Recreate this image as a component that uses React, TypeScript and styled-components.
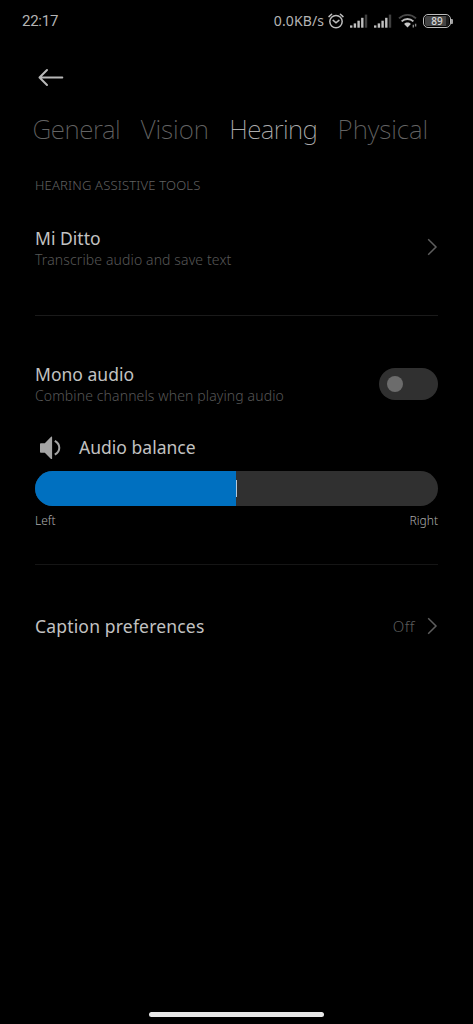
import React from 'react';
import styled, { createGlobalStyle } from 'styled-components';

const GlobalStyle = createGlobalStyle`
  * { box-sizing: border-box; }
  body {
    margin: 0;
    background: #000;
    font-family: "Noto Sans", "Open Sans", sans-serif;
  }
`;

const Screen = styled.div`
  display: flex;
  flex-direction: column;
  height: 1024px;
  background: #000;
  color: #c8c8c8;
  white-space: nowrap;
  overflow: hidden;
`;

const StatusBar = styled.header`
  display: flex;
  align-items: center;
  justify-content: space-between;
  height: 42px;
  padding: 0 20px 0 22px;
  color: #b4b4b4;
`;

const Clock = styled.span`
  font-family: Roboto, sans-serif;
  font-size: 15px;
  line-height: 20px;
  letter-spacing: -0.25px;
`;

const StatusIcons = styled.div`
  display: flex;
  align-items: center;
`;

const NetSpeed = styled.span`
  margin-right: 4px;
  font-size: 14px;
  line-height: 20px;
  letter-spacing: 0.1px;
`;

const StatusIcon = styled.svg<{ $gap?: number }>`
  display: block;
  margin-right: ${p => p.$gap ?? 0}px;
`;

const Battery = styled.div`
  display: flex;
  align-items: center;
`;

const BatteryShell = styled.div`
  display: flex;
  width: 28px;
  height: 14px;
  padding: 1px;
  border: 1.5px solid #bcbcbc;
  border-radius: 5px;
`;

const BatteryLevel = styled.div`
  flex: 1;
  border-radius: 2px;
  background: linear-gradient(90deg, #444 89%, #1c1c1c 89%);
  color: #d8d8d8;
  font-size: 10px;
  font-weight: 500;
  line-height: 10px;
  text-align: center;
`;

const BatteryTip = styled.div`
  width: 2px;
  height: 5px;
  border-radius: 0 1px 1px 0;
  background: #a0a0a0;
`;

const TitleBar = styled.div`
  display: flex;
  align-items: center;
  height: 69px;
  padding-left: 37px;
`;

const BackButton = styled.button`
  display: flex;
  padding: 0;
  border: 0;
  background: none;
  color: #b8b8b8;
`;

const Tabs = styled.nav`
  display: flex;
  gap: 20.5px;
  padding-left: 32.5px;
`;

const Tab = styled.a<{ $active?: boolean; $spacing: number }>`
  color: ${p => (p.$active ? '#acacac' : '#646464')};
  font-size: 26px;
  font-weight: 220;
  line-height: 37px;
  letter-spacing: ${p => p.$spacing}px;
`;

const Content = styled.main`
  flex: 1;
  display: flex;
  flex-direction: column;
  padding: 27px 35px 0;
`;

const SectionTitle = styled.h2`
  margin: 0 0 32px;
  color: #626262;
  font-size: 13px;
  font-weight: 300;
  line-height: 20px;
  letter-spacing: 0.18px;
`;

const Item = styled.div`
  display: flex;
  align-items: center;
  justify-content: space-between;
`;

const ItemText = styled.div`
  display: flex;
  flex-direction: column;
  gap: 1px;
`;

const ItemAction = styled.div<{ $lift: number }>`
  display: flex;
  margin-bottom: ${p => p.$lift}px;
`;

const Title = styled.span<{ $spacing?: number }>`
  color: #c2c2c2;
  font-size: 17.5px;
  font-weight: 370;
  line-height: 22px;
  letter-spacing: ${p => p.$spacing ?? 0.02}px;
`;

const Description = styled.span`
  color: #575757;
  font-size: 14px;
  font-weight: 290;
  line-height: 20px;
  letter-spacing: 0.12px;
`;

const Divider = styled.hr<{ $top: number; $bottom: number; $color: string }>`
  width: 100%;
  height: 1px;
  margin: ${p => p.$top}px 0 ${p => p.$bottom}px;
  border: 0;
  background: ${p => p.$color};
`;

const Toggle = styled.button`
  display: flex;
  align-items: center;
  width: 59px;
  height: 32px;
  padding: 0 8px;
  border: 0;
  border-radius: 16px;
  background: #303030;
`;

const Knob = styled.span`
  width: 16px;
  height: 16px;
  border-radius: 50%;
  background: #6c6c6c;
`;

const BalanceHeader = styled.div`
  display: flex;
  align-items: center;
  height: 24px;
  margin-top: 29px;
  padding-left: 4px;
  gap: 16px;
`;

const Slider = styled.div`
  display: flex;
  align-items: center;
  height: 35px;
  margin-top: 12px;
  border-radius: 17.5px;
  background: #303030;
  overflow: hidden;
`;

const SliderFill = styled.div`
  width: 201px;
  height: 100%;
  background: #0070c0;
`;

const SliderMark = styled.div`
  width: 1px;
  height: 17px;
  background: #b4c8da;
`;

const SliderLabels = styled.div`
  display: flex;
  justify-content: space-between;
  margin-top: 6px;
  color: #adadad;
  font-size: 12px;
  font-weight: 350;
  line-height: 17px;
`;

const ItemValue = styled.div`
  display: flex;
  align-items: center;
  gap: 12px;
  color: #5c5c5c;
  font-size: 15px;
  font-weight: 300;
  line-height: 22px;
  letter-spacing: 0.5px;
`;

const HomeBar = styled.div`
  align-self: center;
  width: 175px;
  height: 5px;
  margin: 0 0 7px;
  border-radius: 3px;
  background: #e8e8e8;
`;

const Signal = ({ gap }: { gap: number }) => (
  <StatusIcon $gap={gap} width="18" height="15" viewBox="0 0 18 15" fill="#c0c0c0">
    <rect x="0" y="11.4" width="2.4" height="2.3" />
    <rect x="3.7" y="9.4" width="2.4" height="4.3" />
    <rect x="7.4" y="6.7" width="2.4" height="7" />
    <rect x="11.1" y="3.8" width="2.4" height="9.9" />
    <rect x="14.8" y="0.6" width="2.4" height="13.1" fill="#404040" />
  </StatusIcon>
);

const Chevron = () => (
  <svg width="11" height="18" viewBox="0 0 11 18" fill="none" stroke="#5e5e5e" strokeWidth="1.5">
    <path d="M1.2 1.2 9 9l-7.8 7.8" />
  </svg>
);

export default function App() {
  return (
    <Screen>
      <GlobalStyle />
      <StatusBar>
        <Clock>22:17</Clock>
        <StatusIcons>
          <NetSpeed>0.0KB/s</NetSpeed>
          <StatusIcon $gap={6} width="16" height="16" viewBox="0 0 16 16" fill="none" stroke="#bcbcbc" strokeWidth="1.5" strokeLinecap="round">
            <circle cx="8" cy="8.6" r="6.2" />
            <path d="M1 3.6 3.6 1.2M15 3.6l-2.6-2.4M5.2 7.4 8 9.8l2.9-2.4" />
          </StatusIcon>
          <Signal gap={6} />
          <Signal gap={6} />
          <StatusIcon $gap={5} width="20" height="16" viewBox="0 0 20 16" fill="none" strokeWidth="1.9">
            <path d="M1 5.4C6 .7 13 .7 18 5.4" stroke="#484848" />
            <path d="M3.6 8.4c3.4-3.2 8.4-3.2 11.8 0" stroke="#bcbcbc" />
            <path d="M6.1 11c2-1.9 4.8-1.9 6.8 0L9.5 14.4z" fill="#c8c8c8" />
            <path d="M15.3 11.7v2.8M17.6 10.8v2.8" stroke="#888" strokeWidth="1.4" />
          </StatusIcon>
          <Battery>
            <BatteryShell>
              <BatteryLevel>89</BatteryLevel>
            </BatteryShell>
            <BatteryTip />
          </Battery>
        </StatusIcons>
      </StatusBar>

      <TitleBar>
        <BackButton aria-label="Back">
          <svg width="27" height="20" viewBox="0 0 27 20" fill="none" stroke="currentColor" strokeWidth="2" strokeLinecap="round" strokeLinejoin="round">
            <path d="M25.3 10.5H2.5M10 3l-7.5 7.5L10 18" />
          </svg>
        </BackButton>
      </TitleBar>

      <Tabs>
        <Tab $spacing={-0.45}>General</Tab>
        <Tab $spacing={-0.05}>Vision</Tab>
        <Tab $spacing={-0.65} $active>Hearing</Tab>
        <Tab $spacing={-0.05}>Physical</Tab>
      </Tabs>

      <Content>
        <SectionTitle>HEARING ASSISTIVE TOOLS</SectionTitle>
        <Item>
          <ItemText>
            <Title>Mi Ditto</Title>
            <Description>Transcribe audio and save text</Description>
          </ItemText>
          <ItemAction $lift={4}>
            <Chevron />
          </ItemAction>
        </Item>

        <Divider $top={45} $bottom={47} $color="#1a1a1a" />

        <Item>
          <ItemText>
            <Title>Mono audio</Title>
            <Description>Combine channels when playing audio</Description>
          </ItemText>
          <ItemAction $lift={2}>
            <Toggle role="switch" aria-checked="false" aria-label="Mono audio">
              <Knob />
            </Toggle>
          </ItemAction>
        </Item>

        <BalanceHeader>
          <svg width="24" height="24" viewBox="0 0 24 24">
            <path d="M1.8 8.2h4l6.3-6.4c.5-.4 1-.2 1 .5v21.4c0 .6-.5.9-1 .4l-6.3-6.3h-4c-.5 0-.8-.3-.8-.8V9c0-.5.3-.8.8-.8z" fill="#a4a4a4" />
            <path d="M15.8 5.800c6 3.400 6 10.400 0 13.900" fill="none" stroke="#a4a4a4" strokeWidth="2" />
          </svg>
          <Title>Audio balance</Title>
        </BalanceHeader>
        <Slider>
          <SliderFill />
          <SliderMark />
        </Slider>
        <SliderLabels>
          <span>Left</span>
          <span>Right</span>
        </SliderLabels>

        <Divider $top={35} $bottom={50} $color="#151515" />

        <Item>
          <Title $spacing={0.18}>Caption preferences</Title>
          <ItemValue>
            Off
            <Chevron />
          </ItemValue>
        </Item>
      </Content>
      <HomeBar />
    </Screen>
  );
}
